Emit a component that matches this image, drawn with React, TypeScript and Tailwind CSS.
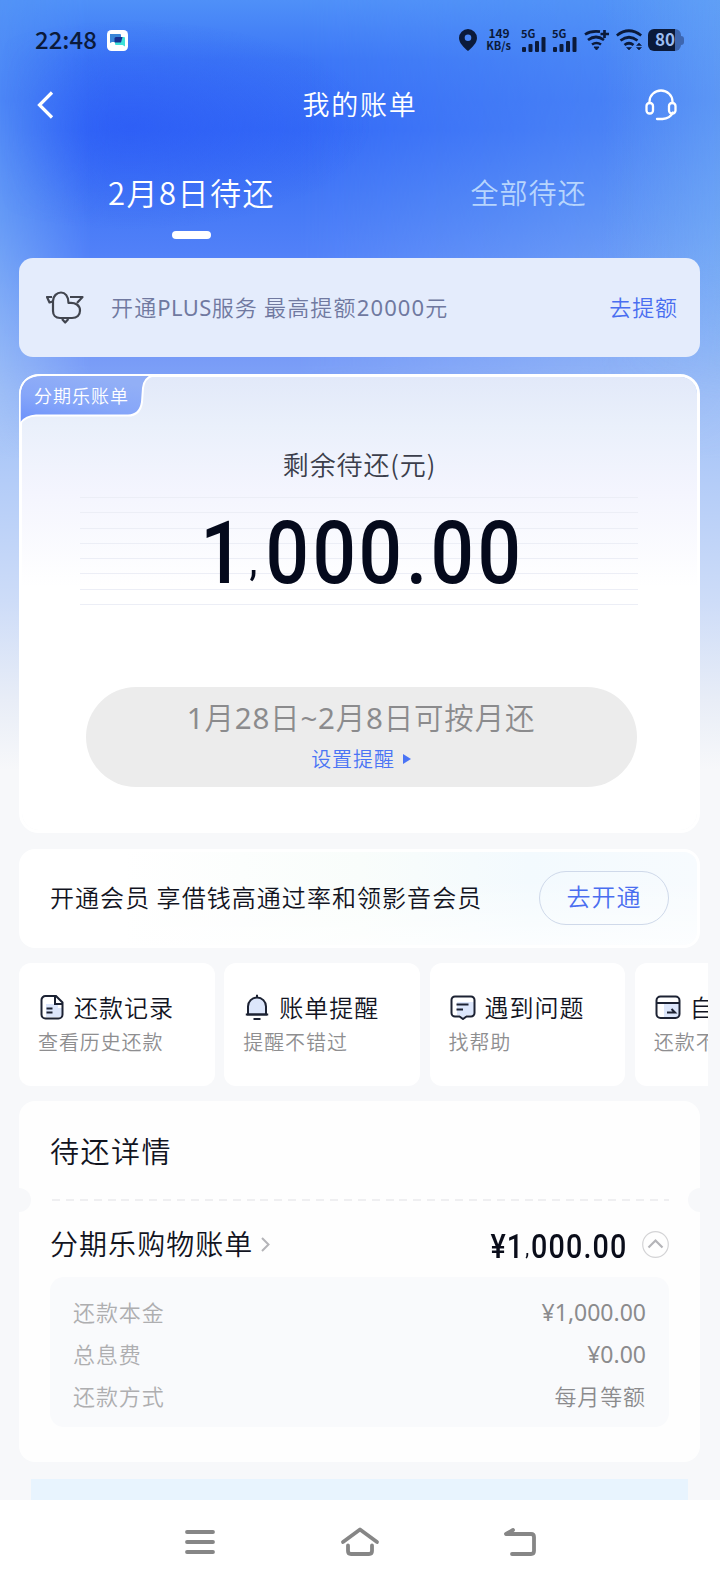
import type { ReactNode } from "react";

const tiles = [
  { icon: <RecordIcon />, title: "还款记录", sub: "查看历史还款" },
  { icon: <BellIcon />, title: "账单提醒", sub: "提醒不错过" },
  { icon: <ChatIcon />, title: "遇到问题", sub: "找帮助" },
  { icon: <CardIcon />, title: "自", sub: "还款不" },
];

const details = [
  { label: "还款本金", value: "¥1,000.00" },
  { label: "总息费", value: "¥0.00" },
  { label: "还款方式", value: "每月等额" },
];

function RecordIcon() {
  return (
    <svg width="26" height="26" viewBox="0 0 26 26" fill="none" stroke="#1c2233" strokeWidth="2">
      <path d="M7 10h12v4h4v6q0 3-3 3H7z" fill="#dce6fb" stroke="none" />
      <path d="M6.500 2h10.500l6.500 6.500V20.500a4 4 0 0 1-4 4H6.500a4 4 0 0 1-4-4V6a4 4 0 0 1 4-4zM16 2.500V10h7M7.500 14.500h6M7.500 18.500h6" />
    </svg>
  );
}

function BellIcon() {
  return (
    <svg width="26" height="26" viewBox="0 0 26 26" fill="none" stroke="#1c2233" strokeWidth="2">
      <path d="M4 20.500V12.500a9 9 0 0 1 18 0v8z" fill="#dce6fb" />
      <path d="M13 3.500V.8M1.800 20.500h22.400M9.500 25h7" />
    </svg>
  );
}

function ChatIcon() {
  return (
    <svg width="26" height="26" viewBox="0 0 26 26" fill="none" stroke="#1c2233" strokeWidth="2">
      <path d="M7 8h17v13h-8l-3 3-3-3H7z" fill="#dce6fb" stroke="none" />
      <path d="M5 2.500h16a3.500 3.500 0 0 1 3.500 3.500v13a3.500 3.500 0 0 1-3.500 3.500h-4.500L13 25l-3.500-2.500H5A3.500 3.500 0 0 1 1.500 19V6A3.500 3.500 0 0 1 5 2.500zM6.500 10.500h12M6.500 15.500h6.500" />
    </svg>
  );
}

function CardIcon() {
  return (
    <svg width="26" height="26" viewBox="0 0 26 26" fill="none" stroke="#1c2233" strokeWidth="2">
      <path d="M9 10h15v13H9z" fill="#dce6fb" stroke="none" />
      <rect x="1.500" y="2.500" width="23" height="21.500" rx="4" />
      <path d="M1.500 9h23M12 18.500h8l-3.500-3.500" />
    </svg>
  );
}

function Signal() {
  return (
    <div className="w-[24px] h-[23px] flex flex-col">
      <span className="text-[11px] leading-[9px] font-bold -ml-px">5G</span>
      <svg className="-mt-[2px]" width="25" height="16" viewBox="0 0 25 16" fill="#0b1a3a">
        <rect x="0" y="11" width="4" height="5" rx="1" />
        <rect x="6.500" y="8" width="4" height="8" rx="1" />
        <rect x="13" y="5" width="4" height="11" rx="1" />
        <rect x="19.500" y="1" width="4" height="15" rx="1" />
      </svg>
    </div>
  );
}

function Wifi({ children }: { children: ReactNode }) {
  return (
    <svg width="26" height="22" viewBox="0 0 26 22" fill="none" stroke="#0b1a3a" strokeWidth="2.700">
      {children}
    </svg>
  );
}

function StatusBar() {
  return (
    <div className="h-[80px] flex items-center pl-[35px] text-[#0b1a3a]">
      <span className="text-[24px] leading-none font-medium w-[72px] -mt-[2px]">22:48</span>
      <svg width="21" height="21" viewBox="0 0 21 21">
        <rect width="21" height="21" rx="4.500" fill="#fff" />
        <path d="M3 4h10q1 0 1 1v7H5l-2 1z" fill="#3a86d8" />
        <path d="M8 7h9q1 0 1 1v8.500L15.500 15H9q-1 0-1-1z" fill="#3fe0d8" />
        <path d="M8.500 7h7L14 12.500H7.500V8z" fill="#17308f" />
      </svg>
      <svg className="ml-[331px]" width="18" height="22" viewBox="0 0 18 22">
        <path
          d="M9 0a9 9 0 0 1 9 9c0 5-5 9.500-9 13C5 18.500 0 14 0 9a9 9 0 0 1 9-9zm0 5.500a3.300 3.300 0 1 0 0 6.600 3.300 3.300 0 0 0 0-6.600z"
          fill="#0b1a3a"
        />
      </svg>
      <div className="ml-[8px] w-[28px] text-center text-[12px] leading-[12px] font-bold -mt-[2px]">
        149
        <br />
        <span className="text-[11px] -ml-px">KB/s</span>
      </div>
      <div className="ml-[9px] flex gap-[7px]">
        <Signal />
        <Signal />
      </div>
      <div className="ml-[7px] flex gap-[6px]">
        <Wifi>
          <path d="M1 5.500q6-4 15-2.800M4 11q8-6 16 0M8 15.500q4.500-3 9 0M20.500 1v8M16.500 5h8.500" />
          <path d="M10 18h5l-2.500 3z" fill="#0b1a3a" strokeWidth="1" />
        </Wifi>
        <Wifi>
          <path d="M.8 6.500q12-9.500 24.400 0M4.500 11.500q8.500-6.500 17 0M8.500 16q4.500-3.500 9 0" />
          <path d="M10.500 18.500h5L13 21zM20.500 16.500h5L23 14zM20.500 18.500h5L23 21z" fill="#0b1a3a" strokeWidth=".5" />
        </Wifi>
      </div>
      <div className="ml-[6px] w-[33px] h-[22px] rounded-[6px] bg-[linear-gradient(90deg,#0b1a3a_82%,#3d66b0_82%)] text-[#9cbdf2] text-[17px] leading-[20px] font-bold pl-[7px]">
        80
      </div>
      <div className="w-[3px] h-[9px] rounded-r bg-[#3d66b0]" />
    </div>
  );
}

function Header() {
  return (
    <div className="h-[50px] flex items-center justify-between px-[37px] text-white">
      <svg width="40" height="28" viewBox="0 0 40 28" fill="none" stroke="#fff" strokeWidth="3.200">
        <path d="M15 1.500L2.500 14 15 26.500" />
      </svg>
      <h1 className="text-[27px] leading-none tracking-[1.800px] -mt-[3px] -ml-[2px]">我的账单</h1>
      <svg className="mr-[6px]" width="32" height="32" viewBox="0 0 32 32" fill="none" stroke="#fff" strokeWidth="2.300" strokeLinecap="round">
        <path d="M4.500 14v-1.500a11.500 11 0 0 1 23 0V14M28 23.500q-3 6-10.500 6.500h-5.500" />
        <rect x="1.500" y="14" width="6.500" height="10.500" rx="3" />
        <rect x="24" y="14" width="6.500" height="10.500" rx="3" />
      </svg>
    </div>
  );
}

function Tabs() {
  return (
    <div className="h-[128px] px-[23px] flex text-center">
      <div className="w-1/2 flex flex-col items-center pt-[46px] text-white">
        <span className="text-[31px] leading-none tracking-[1.500px]">2月8日待还</span>
        <span className="mt-[24px] w-[39px] h-[8px] rounded-full bg-white" />
      </div>
      <div className="w-1/2 pt-[48px] text-[28px] leading-none tracking-[1px] text-[#b7d5fd]">
        全部待还
      </div>
    </div>
  );
}

// latin and digits run slightly heavier than the chinese around them
function Num({ children }: { children: ReactNode }) {
  return <span className="font-['Noto_Sans'] font-normal">{children}</span>;
}

function PlusBanner() {
  return (
    <div className="h-[99px] rounded-[14px] bg-[#e4ecfc] flex items-center pl-[27px] pr-[22px] text-[22px] leading-none tracking-[0.900px]">
      <svg width="38" height="34" viewBox="0 0 38 34" fill="none" stroke="#41454f" strokeWidth="2.200" strokeLinejoin="round">
        <path d="M7 10C7 5 11 1.500 15 1.500S22.500 5 22.500 12c7-1 11.500 2.500 11.500 7.500 0 4.500-3 7.500-8 7.500H14c-4.500 0-7-3-7-7z" />
        <path d="M6.500 10.500L3.500 11.500 1 6h5M24 6h12.500L31 12M16 28l3.200 3.500 3.200-3.500" />
      </svg>
      <span className="ml-[27px] -mt-[3px] tracking-[1.150px] text-[#7079a0]">
        开通<span className="tracking-[0.400px]"><Num>PLUS</Num></span>服务 最高提额<Num>20000</Num>元
      </span>
      <span className="ml-auto -mt-[3px] text-[#4a6ef0]">去提额</span>
    </div>
  );
}

// every glyph sits in its own cell so the amount keeps tabular spacing
const amount = [
  { ch: "1", cls: "w-[47px] pl-[5px]" },
  { ch: ",", cls: "w-[21px] text-[40px] -translate-y-[8px]" },
  { ch: "0", cls: "w-[46.700px]" },
  { ch: "0", cls: "w-[46.700px]" },
  { ch: "0", cls: "w-[46.700px]" },
  { ch: ".", cls: "w-[25.300px]" },
  { ch: "0", cls: "w-[46.700px]" },
  { ch: "0", cls: "w-[46.700px]" },
];

function BillCard() {
  return (
    <div className="relative mt-[17px] h-[459px] rounded-[20px] border-[3px] border-white bg-[linear-gradient(180deg,#e2e9f9_0px,#eaf0fb_50px,#f4f5fe_115px,#fff_210px)] bg-clip-padding flex flex-col items-center">
      <svg className="absolute -left-[3px] -top-[3px]" width="140" height="54" viewBox="0 0 140 54">
        <defs>
          <linearGradient id="tag" x1="0" y1="1" x2="0.500" y2="0">
            <stop offset="0" stopColor="#6b90fb" />
            <stop offset="0.500" stopColor="#86a6f9" />
            <stop offset="1" stopColor="#92aff6" />
          </linearGradient>
        </defs>
        <path
          d="M1.500 49V21Q2.500 2 23 2H132Q125 4 124 14L123 28Q121 41.500 109 41.500H17Q7 42 1.500 49z"
          fill="url(#tag)"
        />
        <path d="M134 1.500Q125 4 124 14L123 28Q121 41.500 109 41.500H17Q7 42 1.500 49" fill="none" stroke="#fff" strokeWidth="2" />
        <path d="M.7 50V21Q1.500 1 23 1H136" fill="none" stroke="#fff" strokeWidth="1.500" />
      </svg>
      <span className="absolute left-[12px] top-[9px] text-[18px] leading-none tracking-[1px] text-white">
        分期乐账单
      </span>
      <div className="mt-[74px] text-[26px] leading-none tracking-[0.900px] text-[#3b3e4b]">剩余待还(元)</div>
      <div className="mt-[20px] w-[558px] h-[108px] self-start ml-[58px] bg-[repeating-linear-gradient(180deg,#eceef6_0px,#eceef6_1.200px,transparent_1.200px,transparent_15.250px)]">
        <div className="flex pl-[116px] pt-[12px] items-baseline font-[Roboto] font-medium text-[88px] leading-none text-[#050a1c]">
          {amount.map((a, i) => (
            <span key={i} className={a.cls}>
              <span className="flex justify-center scale-x-[0.870]">{a.ch}</span>
            </span>
          ))}
        </div>
      </div>
      <div className="mt-[82px] ml-[3px] w-[551px] h-[100px] rounded-full bg-[#ececec] flex flex-col items-center pt-[15px]">
        <span className="text-[29.500px] leading-none tracking-[0.800px] text-[#8b8b8d]">
          <Num>1</Num>月<Num>28</Num>日<Num>~2</Num>月<Num>8</Num>日可按月还
        </span>
        <span className="mt-[16px] flex items-center text-[20px] leading-none tracking-[0.900px] text-[#4a74f5]">
          设置提醒
          <svg className="ml-[8px]" width="8" height="10" viewBox="0 0 8 10" fill="#4a74f5">
            <path d="M0 0l8 5-8 5z" />
          </svg>
        </span>
      </div>
    </div>
  );
}

function MemberBanner() {
  return (
    <div className="mt-[16px] h-[99px] rounded-[16px] border-[3px] border-white bg-[linear-gradient(180deg,transparent_30%,#ffffffb0_100%),linear-gradient(90deg,#fff_15%,#f9fdfb_50%,#f3fafe_75%,#f7fbfe_100%)] flex items-center pl-[28px] pr-[28px] leading-none">
      <span className="-mt-[3px] text-[24px] tracking-[1.050px] text-[#12141f]">开通会员 享借钱高通过率和领影音会员</span>
      <button className="ml-auto -mt-px w-[130px] h-[54px] pb-[4px] rounded-full border border-[#cfd9ea] text-[24px] tracking-[1px] text-[#4a6ef0]">
        去开通
      </button>
    </div>
  );
}

function Tiles() {
  return (
    <div className="mt-[15px] -mr-[8px] flex gap-[9.700px] overflow-hidden">
      {tiles.map((t) => (
        <div key={t.title} className="w-[195.600px] h-[123px] shrink-0 rounded-[12px] bg-white pl-[20px] pt-[31px] whitespace-nowrap">
          <div className="flex items-center">
            {t.icon}
            <span className="ml-[9px] -mt-px text-[24px] leading-none tracking-[1px] text-[#12141f]">{t.title}</span>
          </div>
          <div className="mt-[12px] -ml-px text-[20px] leading-none tracking-[0.900px] text-[#8e8e90]">{t.sub}</div>
        </div>
      ))}
    </div>
  );
}

function DetailCard() {
  return (
    <div className="relative mt-[15px] h-[361px] rounded-[16px] bg-[#fefefe] px-[31px] pt-[35px]">
      <span className="absolute -left-[12px] top-[87px] size-[24px] rounded-full bg-[#f7f8fa]" />
      <span className="absolute -right-[12px] top-[87px] size-[24px] rounded-full bg-[#f7f8fa]" />
      <h2 className="text-[29px] leading-none tracking-[1.500px] text-[#12141f]">待还详情</h2>
      <div className="mt-[34px] h-[2px] ml-[2px] bg-[repeating-linear-gradient(90deg,#efeff1_0px,#efeff1_8px,transparent_8px,transparent_13.900px)]" />
      <div className="h-[76px] pt-[11px] flex items-center">
        <span className="-mt-[3px] text-[28px] leading-none tracking-[1.050px] text-[#12141f]">分期乐购物账单</span>
        <svg className="ml-[8px]" width="9" height="15" viewBox="0 0 9 15" fill="none" stroke="#b4b4b8" strokeWidth="2">
          <path d="M1 1l6.500 6.500L1 14" />
        </svg>
        <span className="mt-[3px] ml-auto w-[138px] flex justify-end whitespace-nowrap font-[Roboto] font-medium text-[33px] leading-none tracking-[1.300px] text-[#0a0d1a]">
          <span className="origin-right scale-x-[0.870]">
            ¥1<span className="inline-block text-[20px] -translate-y-[3px] px-px">,</span>000.00
          </span>
        </span>
        <svg className="ml-[15px]" width="27" height="27" viewBox="0 0 27 27" fill="none">
          <circle cx="13.500" cy="13.500" r="12.800" stroke="#d4d4d6" strokeWidth="1.200" />
          <path d="M6.500 16.500l7-7 7 7" stroke="#b4b4b8" strokeWidth="2.200" />
        </svg>
      </div>
      <div className="h-[150px] rounded-[14px] bg-[#f9fafc] px-[23px] pt-[23px] leading-none">
        {details.map((d) => (
          <div key={d.label} className="flex justify-between h-[41.800px] text-[22px]">
            <span className="tracking-[0.900px] text-[#aeaeb0]">{d.label}</span>
            {d.value.startsWith("¥") ? (
              <span className="tracking-[0px] text-[23px] text-[#8b8b8d]">
                <Num>{d.value}</Num>
              </span>
            ) : (
              <span className="tracking-[0.900px] text-[#8b8b8d]">{d.value}</span>
            )}
          </div>
        ))}
      </div>
    </div>
  );
}

function NavBar() {
  return (
    <div className="h-[84px] bg-white flex items-center justify-center gap-[121px]">
      <svg width="40" height="34" viewBox="0 0 40 34" stroke="#868686" strokeWidth="3.800" strokeLinecap="round">
        <path d="M8 7h26M8 17h26M8 27h26" />
      </svg>
      <svg width="40" height="34" viewBox="0 0 40 34" fill="none" stroke="#868686" strokeWidth="3.800" strokeLinecap="round" strokeLinejoin="round">
        <path d="M3 17L20 4.500 37 17M8 20.500v5.500q0 3 3 3h18q3 0 3-3v-5.500" />
      </svg>
      <svg width="40" height="34" viewBox="0 0 40 34" fill="none" stroke="#868686" strokeWidth="3.800" strokeLinecap="round" strokeLinejoin="round">
        <path d="M12 5L5 9h25q3 0 3 3v14q0 3-3 3H11" />
      </svg>
    </div>
  );
}

export default function App() {
  return (
    <div className="relative w-[720px] h-[1584px] overflow-hidden bg-[#f7f8fa] font-['Noto_Sans_CJK_SC',sans-serif] font-[350]">
      {/* sky backdrop: pale edges, deep blue centre */}
      <div className="absolute inset-x-0 top-0 h-[780px] bg-[linear-gradient(180deg,#5394f7_0px,#4f89f6_100px,#6a9ff6_220px,#9fc0f7_390px,#b3ccf8_480px,#cddcf8_600px,#e8edf7_700px,#f7f8fa_770px)]" />
      <div className="absolute inset-x-0 top-0 h-[460px] bg-[linear-gradient(180deg,#4f90f8_0px,#3c76f6_60px,#346af7_130px,#4478f6_200px,#5080f8_250px,#7a9df7_365px,#7a9df700_460px)] [mask-image:linear-gradient(90deg,transparent_-10px,black_90px,black_300px,transparent_760px)]" />
      <div className="absolute inset-x-0 top-0 h-[300px] bg-[radial-gradient(ellipse_300px_130px_at_130px_125px,#2b59f5a0_0%,#2b59f500_80%)] [mask-image:linear-gradient(90deg,transparent_0px,black_110px)]" />
      <div className="absolute right-0 top-0 w-[120px] h-[400px] bg-[linear-gradient(90deg,#7db8f500,#7db8f555)] [mask-image:linear-gradient(180deg,black_260px,transparent)]" />

      <div className="relative">
        <StatusBar />
        <Header />
        <Tabs />
        <div className="h-[1242px] pl-[19px] pr-[20px] overflow-hidden">
          <PlusBanner />
          <BillCard />
          <MemberBanner />
          <Tiles />
          <DetailCard />
          <div className="mt-[17px] mx-[12px] h-[40px] bg-[#e8f4fe]" />
        </div>
        <NavBar />
      </div>
    </div>
  );
}
